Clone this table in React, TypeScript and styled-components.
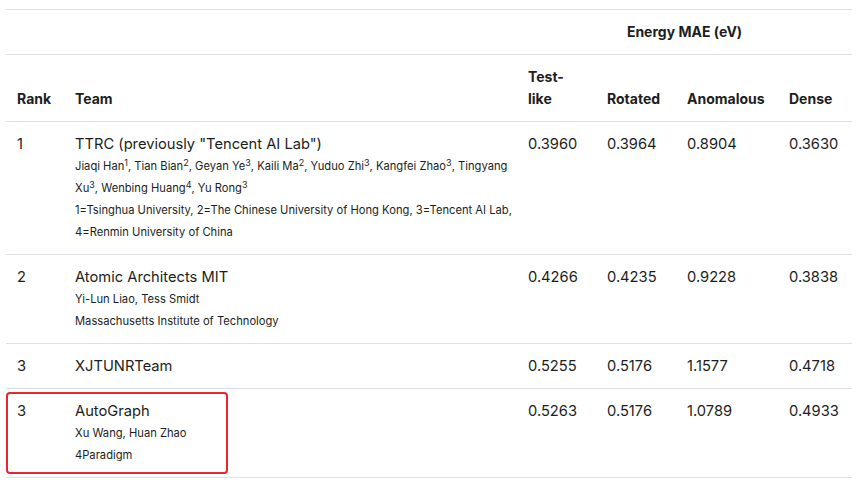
import React from "react";
import styled, { createGlobalStyle } from "styled-components";

const GlobalStyle = createGlobalStyle`
  body {
    margin: 0;
    background: #fff;
    font-family: Inter, "Open Sans", sans-serif;
    color: #1c1e21;
  }
`;

const Page = styled.div`
  padding: 9px 11px 0 6px;
`;

const Table = styled.table`
  width: 846px;
  border-collapse: collapse;
  table-layout: fixed;
  border-top: 1px solid #dde1e6;
`;

const Col = styled.col<{ $w: number }>`
  width: ${(p) => p.$w}px;
`;

const Row = styled.tr`
  border-bottom: 1px solid #dde1e6;
`;

const HeadCell = styled.th<{ $center?: boolean }>`
  padding: 11px;
  font-size: 14px;
  font-weight: 650;
  line-height: 22px;
  text-align: ${(p) => (p.$center ? "center" : "left")};
  vertical-align: bottom;
`;

const Cell = styled.td<{ $flush?: boolean }>`
  padding: ${(p) => (p.$flush ? "0" : "11px")};
  font-size: 14.7px;
  line-height: 22px;
  vertical-align: top;
`;

const TeamCell = styled(Cell)`
  padding-right: 4px;
`;

const TeamName = styled.div`
  font-size: 14.7px;
  line-height: 22px;
`;

const Detail = styled.div`
  font-size: 11.2px;
  line-height: 22px;

  sup {
    font-size: 9px;
    line-height: 9px;
    vertical-align: baseline;
    position: relative;
    top: -4px;
  }
`;

const Highlight = styled.div`
  position: relative;
  padding: 11px;

  &::after {
    content: "";
    position: absolute;
    left: 0;
    top: 3px;
    width: 222px;
    height: 82px;
    border: 2px solid #e8262b;
    border-radius: 4px;
    box-sizing: border-box;
    pointer-events: none;
  }
`;

interface Entry {
  rank: string;
  team: string;
  authors?: React.ReactNode;
  org?: string;
  scores: string[];
  marked?: boolean;
}

const entries: Entry[] = [
  {
    rank: "1",
    team: 'TTRC (previously "Tencent AI Lab")',
    authors: (
      <>
        Jiaqi Han<sup>1</sup>, Tian Bian<sup>2</sup>, Geyan Ye<sup>3</sup>, Kaili Ma<sup>2</sup>, Yuduo Zhi
        <sup>3</sup>, Kangfei Zhao<sup>3</sup>, Tingyang Xu<sup>3</sup>, Wenbing Huang<sup>4</sup>, Yu Rong
        <sup>3</sup>
      </>
    ),
    org: "1=Tsinghua University, 2=The Chinese University of Hong Kong, 3=Tencent AI Lab, 4=Renmin University of China",
    scores: ["0.3960", "0.3964", "0.8904", "0.3630"],
  },
  {
    rank: "2",
    team: "Atomic Architects MIT",
    authors: "Yi-Lun Liao, Tess Smidt",
    org: "Massachusetts Institute of Technology",
    scores: ["0.4266", "0.4235", "0.9228", "0.3838"],
  },
  {
    rank: "3",
    team: "XJTUNRTeam",
    scores: ["0.5255", "0.5176", "1.1577", "0.4718"],
  },
  {
    rank: "3",
    team: "AutoGraph",
    authors: "Xu Wang, Huan Zhao",
    org: "4Paradigm",
    scores: ["0.5263", "0.5176", "1.0789", "0.4933"],
    marked: true,
  },
];

export default function App() {
  return (
    <Page>
      <GlobalStyle />
      <Table>
        <colgroup>
          <Col $w={58} />
          <Col $w={453} />
          <Col $w={79} />
          <Col $w={80} />
          <Col $w={102} />
          <Col $w={74} />
        </colgroup>
        <thead>
          <Row>
            <HeadCell colSpan={2} />
            <HeadCell colSpan={4} $center>
              Energy MAE (eV)
            </HeadCell>
          </Row>
          <Row>
            <HeadCell>Rank</HeadCell>
            <HeadCell>Team</HeadCell>
            <HeadCell>Test-like</HeadCell>
            <HeadCell>Rotated</HeadCell>
            <HeadCell>Anomalous</HeadCell>
            <HeadCell>Dense</HeadCell>
          </Row>
        </thead>
        <tbody>
          {entries.map((e, i) => (
            <Row key={i}>
              {e.marked ? (
                <Cell $flush>
                  <Highlight>{e.rank}</Highlight>
                </Cell>
              ) : (
                <Cell>{e.rank}</Cell>
              )}
              <TeamCell>
                <TeamName>{e.team}</TeamName>
                {e.authors && <Detail>{e.authors}</Detail>}
                {e.org && <Detail>{e.org}</Detail>}
              </TeamCell>
              {e.scores.map((s, j) => (
                <Cell key={j}>{s}</Cell>
              ))}
            </Row>
          ))}
        </tbody>
      </Table>
    </Page>
  );
}
